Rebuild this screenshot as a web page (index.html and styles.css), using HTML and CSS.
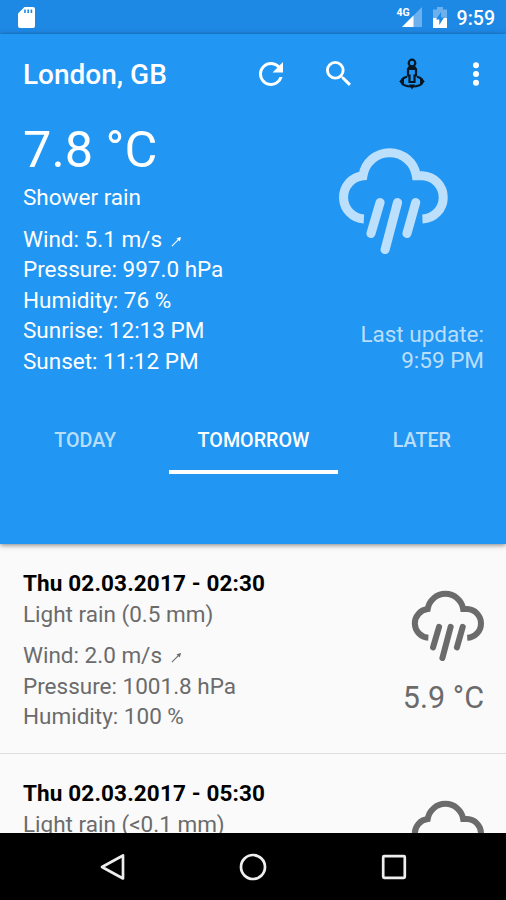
FILE: index.html
```html
<!DOCTYPE html>
<html lang="en">
<head>
<meta charset="utf-8">
<title>Weather</title>
<link rel="stylesheet" href="styles.css">
</head>
<body>
<svg width="0" height="0" class="defs">
  <symbol id="rain" viewBox="55 54 330 318">
    <g fill="none" stroke="currentColor" stroke-width="27">
      <path d="M132 268A64.5 64.5 0 0 1 129 139.5A80.4 80.4 0 0 1 288 139.5H306A64.3 64.3 0 0 1 306 268"/>
      <path stroke-linecap="round" d="M180 219L153 311M232 219L195 359M286 219L260 311"/>
    </g>
  </symbol>
  <symbol id="arrow" viewBox="0 0 12 12">
    <path d="M1 11L8 4" stroke="currentColor" stroke-width="1.2"/>
    <path d="M11 1L9.6 6L6 2.4Z" fill="currentColor"/>
  </symbol>
</svg>
<div class="phone">
  <div class="status">
    <svg class="sd" width="17" height="21" viewBox="0 0 17 21"><path fill="#fff" d="M6.5 0H15a2 2 0 0 1 2 2V19a2 2 0 0 1-2 2H2a2 2 0 0 1-2-2V6.5z"/><path stroke="#1e88e5" stroke-width="1.6" d="M7 2.5V6M10.2 2.5V6M13.4 2.5V6"/></svg>
    <div class="network"><span>4G</span>
      <svg width="21" height="20" viewBox="0 0 21 20"><path fill="#fff" fill-opacity=".35" d="M21 0V20H1z"/><path fill="#fff" d="M12.5 8.5V20H1z"/></svg>
    </div>
    <svg class="battery" width="14" height="21" viewBox="0 0 14 21"><path fill="#fff" fill-opacity=".35" d="M0 2.5H4V0H10V2.5H14V11H0z"/><path fill="#fff" d="M0 11H14V21H0z"/><path fill="#1e88e5" d="M8 5L3 12.5H6.3V18L11 10.5H8z"/></svg>
    <span class="clock">9:59</span>
  </div>
  <header class="hero">
    <div class="toolbar">
      <h1>London, GB</h1>
      <svg class="refresh" width="24" height="24" viewBox="4 4 16 16"><path fill="#fff" d="M17.65 6.35A7.96 7.96 0 0 0 12 4a8 8 0 1 0 7.73 10h-2.08A6 6 0 1 1 12 6c1.66 0 3.14.69 4.22 1.78L13 11h7V4z"/></svg>
      <svg class="search" width="25" height="25" viewBox="3 3 17.5 17.5"><path fill="#fff" d="M15.5 14h-.79l-.28-.27A6.47 6.47 0 0 0 16 9.5 6.5 6.5 0 1 0 9.5 16c1.61 0 3.09-.59 4.23-1.57l.27.28v.79l5 4.99L20.49 19zm-6 0a4.5 4.5 0 1 1 0-9 4.5 4.5 0 0 1 0 9z"/></svg>
      <svg class="locate" width="26" height="32" viewBox="0 0 26 32"><g fill="none" stroke="#061622" stroke-width="2.200"><circle cx="13" cy="5" r="3.300"/><path d="M10.500 9L9 11V17.500H10.500V24H15.500V17.500H17V11L15.500 9z"/><path d="M8 18.800C-1 21 .5 28 13 28.500C25.500 28 27 21 18 18.800"/></g><path fill="#061622" d="M10 26.500L16 26.500L13 31.500zM0 23.500L5 20.500V26zM26 23.500L21 20.500V26zM10 9.500H16V12H10z"/></svg>
      <svg class="more" width="6" height="24" viewBox="0 0 6 24"><g fill="#fff"><circle cx="3" cy="3.200" r="3"/><circle cx="3" cy="12" r="3"/><circle cx="3" cy="20.800" r="3"/></g></svg>
    </div>
    <div class="current">
      <div class="details">
        <div class="temp">7.8 °C</div>
        <div class="desc">Shower rain</div>
        <div>Wind: 5.1 m/s <svg class="arrow"><use href="#arrow"/></svg></div>
        <div>Pressure: 997.0 hPa</div>
        <div>Humidity: 76 %</div>
        <div>Sunrise: 12:13 PM</div>
        <div>Sunset: 11:12 PM</div>
      </div>
      <div class="side">
        <svg class="cloud"><use href="#rain"/></svg>
        <div class="updated">Last update:<br>9:59 PM</div>
      </div>
    </div>
    <nav class="tabs"><div>TODAY</div><div class="active">TOMORROW</div><div>LATER</div></nav>
  </header>
  <main class="list">
    <article class="row">
      <div class="info">
        <div class="date">Thu 02.03.2017 - 02:30</div>
        <div class="desc">Light rain (0.5 mm)</div>
        <div>Wind: 2.0 m/s <svg class="arrow"><use href="#arrow"/></svg></div>
        <div>Pressure: 1001.8 hPa</div>
        <div>Humidity: 100 %</div>
      </div>
      <div class="reading"><svg class="cloud"><use href="#rain"/></svg><div>5.9 °C</div></div>
    </article>
    <article class="row">
      <div class="info">
        <div class="date">Thu 02.03.2017 - 05:30</div>
        <div class="desc">Light rain (&lt;0.1 mm)</div>
      </div>
      <div class="reading"><svg class="cloud"><use href="#rain"/></svg></div>
    </article>
  </main>
  <footer class="navbar">
    <svg width="28" height="28" viewBox="0 0 28 28"><path d="M24 2.500V25.500L3 14z"/></svg>
    <svg width="28" height="28" viewBox="0 0 28 28"><circle cx="14" cy="14" r="12"/></svg>
    <svg width="28" height="28" viewBox="0 0 28 28"><rect x="3.200" y="3.200" width="21.600" height="21.600" rx="1"/></svg>
  </footer>
</div>
</body>
</html>
```

FILE: styles.css
```css
* { box-sizing: border-box; }
body { margin: 0; font-family: Roboto, sans-serif; font-size: 22.5px; line-height: 30.5px; }
svg { display: block; flex: none; }
.defs { position: absolute; }
.phone { width: 506px; height: 900px; display: flex; flex-direction: column; overflow: hidden; background: #fafafa; }
.status { height: 34px; flex: none; display: flex; align-items: flex-start; padding: 7px 11px 0 18px; background: #1e88e5; color: #fff; }
.network { display: flex; margin-left: auto; }
.network span { font-size: 10.500px; font-weight: 700; line-height: 12px; margin-right: -9px; }
.battery { margin-left: 11px; }
.clock { margin-left: 10px; font-size: 19.500px; font-weight: 500; line-height: 23px; }
.hero { height: 510px; flex: none; background: #2196f3; color: #fff; box-shadow: 0 1px 5px rgba(0, 0, 0, .5); z-index: 1; }
.toolbar { height: 80px; display: flex; align-items: center; padding: 0 27px 0 23px; }
h1 { margin: 0 auto 0 0; padding-top: 2px; font-size: 28px; font-weight: 500; line-height: 34px; }
.refresh { margin-bottom: 1px; }
.search { margin: 0 0 2px 43px; }
.locate { margin-left: 48.500px; }
.more { margin-left: 48px; }
.current { display: flex; justify-content: space-between; padding: 5px 22px 0 23px; height: 286px; }
.temp { font-size: 50.500px; line-height: 62px; }
.current .temp { margin-bottom: 1px; }
.desc { margin-bottom: 11px; }
.arrow { display: inline-block; width: 11px; height: 11px; margin-left: 3px; }
.side { display: flex; flex-direction: column; align-items: flex-end; color: rgba(255, 255, 255, .7); }
.side .cloud { width: 111px; height: 107px; margin: 28px 35px 0 0; }
.updated { margin-top: 66.500px; text-align: right; line-height: 26.500px; }
.tabs { display: grid; grid-template: 74px / repeat(3, 1fr); margin-left: 1px; height: 74px; font-size: 19.700px; font-weight: 500; text-align: center; color: rgba(255, 255, 255, .7); line-height: 82px; }
.tabs .active { color: #fff; border-bottom: 4px solid #fff; }
.list { flex: 1; min-height: 0; overflow: hidden; color: #6b6b6b; }
.row { display: flex; justify-content: space-between; height: 210px; padding: 24px 22px 0 23px; border-bottom: 1px solid #dedede; }
.date { color: #000; font-weight: 700; letter-spacing: .14px; }
.reading { text-align: right; font-size: 30.500px; line-height: 36px; }
.reading .cloud { width: 74px; height: 71px; margin: 22px -1px 18.500px auto; }
.navbar { height: 67px; flex: none; background: #000; display: flex; justify-content: center; align-items: center; gap: 112.500px; }
.navbar svg { fill: none; stroke: #eee; stroke-width: 2.700px; stroke-linejoin: round; }
```
